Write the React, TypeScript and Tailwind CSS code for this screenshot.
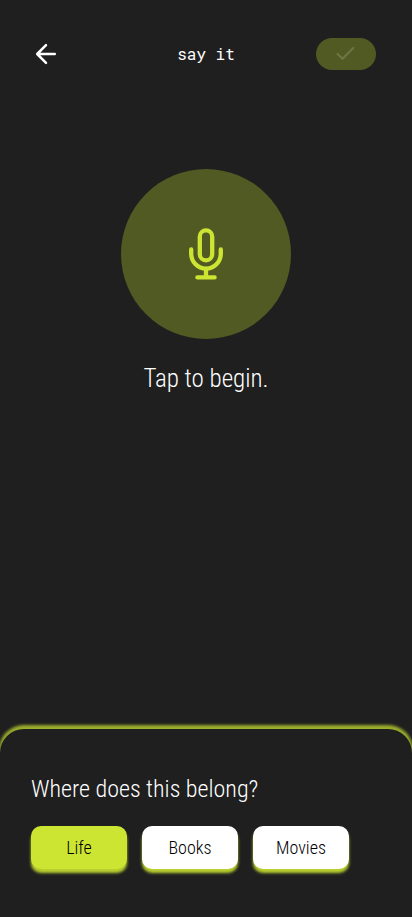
import { useState } from "react";
import clsx from "clsx";

const categories = ["Life", "Books", "Movies"];

const BackIcon = () => (
  <svg
    viewBox="0 0 24 24"
    className="h-6 w-6"
    fill="none"
    stroke="currentColor"
    strokeWidth="2.5"
    strokeLinecap="round"
    strokeLinejoin="round"
    aria-hidden="true"
  >
    <path d="M20.8 12H3.5M12 3.2L3.2 12l8.8 8.8" />
  </svg>
);

const CheckIcon = () => (
  <svg
    viewBox="0 0 24 24"
    className="h-6 w-6"
    fill="none"
    stroke="currentColor"
    strokeWidth="2.2"
    strokeLinecap="round"
    strokeLinejoin="round"
    aria-hidden="true"
  >
    <path d="M3.6 12l5 4.8L19.2 6" />
  </svg>
);

const MicIcon = () => (
  <svg
    viewBox="0 0 56 56"
    className="h-14 w-14"
    fill="none"
    stroke="currentColor"
    strokeWidth="4.3"
    strokeLinecap="round"
    aria-hidden="true"
  >
    <rect x="21.8" y="4.4" width="12.4" height="30" rx="6.2" />
    <path d="M13.2 23.4v4.4a14.8 14.8 0 0 0 29.6 0v-4.4" />
    <path d="M28 43v8M19.4 51.4h17.2" />
  </svg>
);

const App = () => {
  const [category, setCategory] = useState("Life");

  return (
    <main className="flex min-h-screen flex-col overflow-hidden bg-[#1f1f1f] font-['Roboto_Condensed','Liberation_Sans_Narrow','Roboto',sans-serif] text-white">
      <header className="grid grid-cols-3 items-center px-9 pt-[38px]">
        <button type="button" aria-label="Back" className="-ml-0.5 justify-self-start">
          <BackIcon />
        </button>
        <h1 className="text-center font-['Roboto_Mono','Liberation_Mono',monospace] text-base font-normal">
          say it
        </h1>
        <button
          type="button"
          aria-label="Done"
          disabled
          className="flex h-8 w-15 items-center justify-center justify-self-end rounded-full bg-[#525a23] text-[#6d7446]"
        >
          <CheckIcon />
        </button>
      </header>

      <section className="flex grow flex-col items-center pt-[99px]">
        <button
          type="button"
          aria-label="Record"
          className="flex h-[170px] w-[170px] items-center justify-center rounded-full bg-[#525a23] text-[#cce532]"
        >
          <MicIcon />
        </button>
        <p className="mt-[22px] text-[25px] leading-9 font-light">Tap to begin.</p>
      </section>

      <section className="rounded-t-3xl bg-[#1f1f1f] px-[31px] pt-[42px] pb-12 shadow-[0_-3px_3px_1px_#9cae2c]">
        <h2 className="text-2xl leading-9 font-[350]">Where does this belong?</h2>
        <div className="mt-[19px] flex gap-[15px]">
          {categories.map((name) => (
            <button
              key={name}
              type="button"
              aria-pressed={category === name}
              onClick={() => setCategory(name)}
              className={clsx(
                "h-[43px] w-24 rounded-[10px] text-lg font-[350] text-black shadow-[0_4px_3px_#b9d02f]",
                category === name ? "bg-[#cce532]" : "bg-white",
              )}
            >
              {name}
            </button>
          ))}
        </div>
      </section>
    </main>
  );
};

export default App;
